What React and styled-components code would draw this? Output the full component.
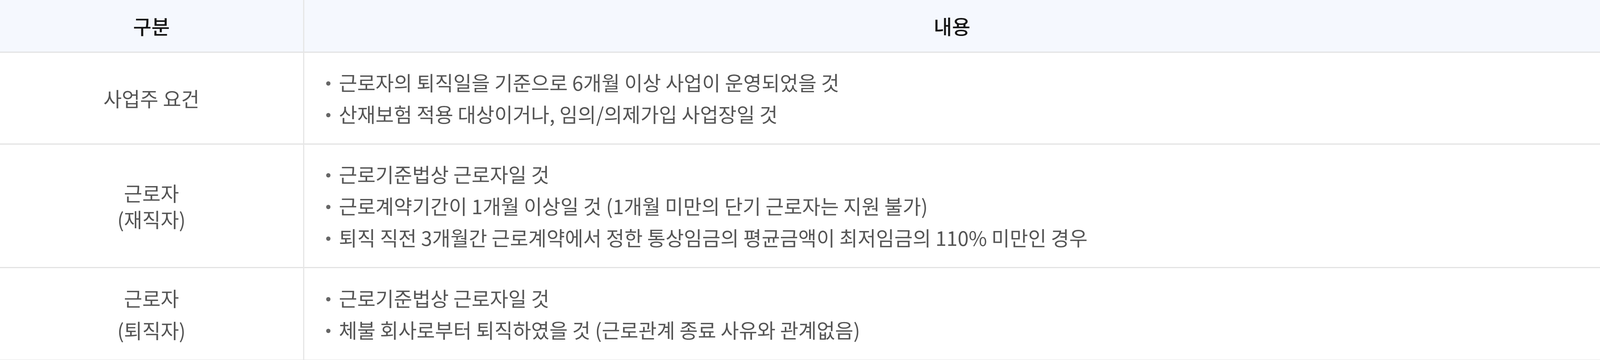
import React from 'react';
import styled, { createGlobalStyle } from 'styled-components';

const GlobalStyle = createGlobalStyle`
  html, body {
    margin: 0;
    padding: 0;
    background: #fff;
  }
  body {
    font-family: 'Noto Sans CJK KR', 'Noto Sans', sans-serif;
  }
`;

const Table = styled.table`
  width: 100%;
  table-layout: fixed;
  border-collapse: collapse;
  font-family: 'Noto Sans CJK KR', 'Noto Sans', sans-serif;
`;

const HeadRow = styled.tr`
  background: #f5f8fe;
  border-bottom: 3px solid #e3e3e3;
`;

const HeadCell = styled.th`
  height: 132px;
  padding: 0;
  font-size: 51px;
  font-weight: 500;
  color: #161616;
  text-align: center;
  vertical-align: middle;
  & + & {
    border-left: 3px solid #e6e6e6;
  }
`;

const Row = styled.tr`
  border-bottom: 3px solid #e3e3e3;
`;

const LabelCell = styled.td`
  padding: 35px 0;
  font-size: 51px;
  line-height: ${(p) => p.$lh || 81}px;
  color: #555;
  text-align: center;
  vertical-align: middle;
`;

const ContentCell = styled.td`
  padding: 35px 40px 35px 56px;
  border-left: 3px solid #e6e6e6;
  vertical-align: middle;
`;

const BulletList = styled.ul`
  margin: 0;
  padding: 0;
  list-style: none;
`;

const BulletItem = styled.li`
  display: flex;
  align-items: center;
  gap: 22px;
  font-size: 51px;
  line-height: 81px;
  color: #555;
  white-space: nowrap;
`;

const Dot = styled.span`
  flex: none;
  width: 11px;
  height: 11px;
  border-radius: 50%;
  background: #666;
  margin-top: 5px;
`;

const rows = [
  {
    label: ['사업주 요건'],
    items: [
      '근로자의 퇴직일을 기준으로 6개월 이상 사업이 운영되었을 것',
      '산재보험 적용 대상이거나, 임의/의제가입 사업장일 것',
    ],
  },
  {
    label: ['근로자', '(재직자)'],
    lh: 67,
    items: [
      '근로기준법상 근로자일 것',
      '근로계약기간이 1개월 이상일 것 (1개월 미만의 단기 근로자는 지원 불가)',
      '퇴직 직전 3개월간 근로계약에서 정한 통상임금의 평균금액이 최저임금의 110% 미만인 경우',
    ],
  },
  {
    label: ['근로자', '(퇴직자)'],
    lh: 82,
    items: [
      '근로기준법상 근로자일 것',
      '체불 회사로부터 퇴직하였을 것 (근로관계 종료 사유와 관계없음)',
    ],
  },
];

export default function App() {
  return (
    <>
      <GlobalStyle />
      <Table>
        <colgroup>
          <col style={{ width: '777px' }} />
          <col />
        </colgroup>
        <thead>
          <HeadRow>
            <HeadCell>구분</HeadCell>
            <HeadCell>내용</HeadCell>
          </HeadRow>
        </thead>
        <tbody>
          {rows.map((row, i) => (
            <Row key={i}>
              <LabelCell $lh={row.lh}>
                {row.label.map((line, j) => (
                  <div key={j}>{line}</div>
                ))}
              </LabelCell>
              <ContentCell>
                <BulletList>
                  {row.items.map((item, j) => (
                    <BulletItem key={j}>
                      <Dot />
                      {item}
                    </BulletItem>
                  ))}
                </BulletList>
              </ContentCell>
            </Row>
          ))}
        </tbody>
      </Table>
    </>
  );
}
